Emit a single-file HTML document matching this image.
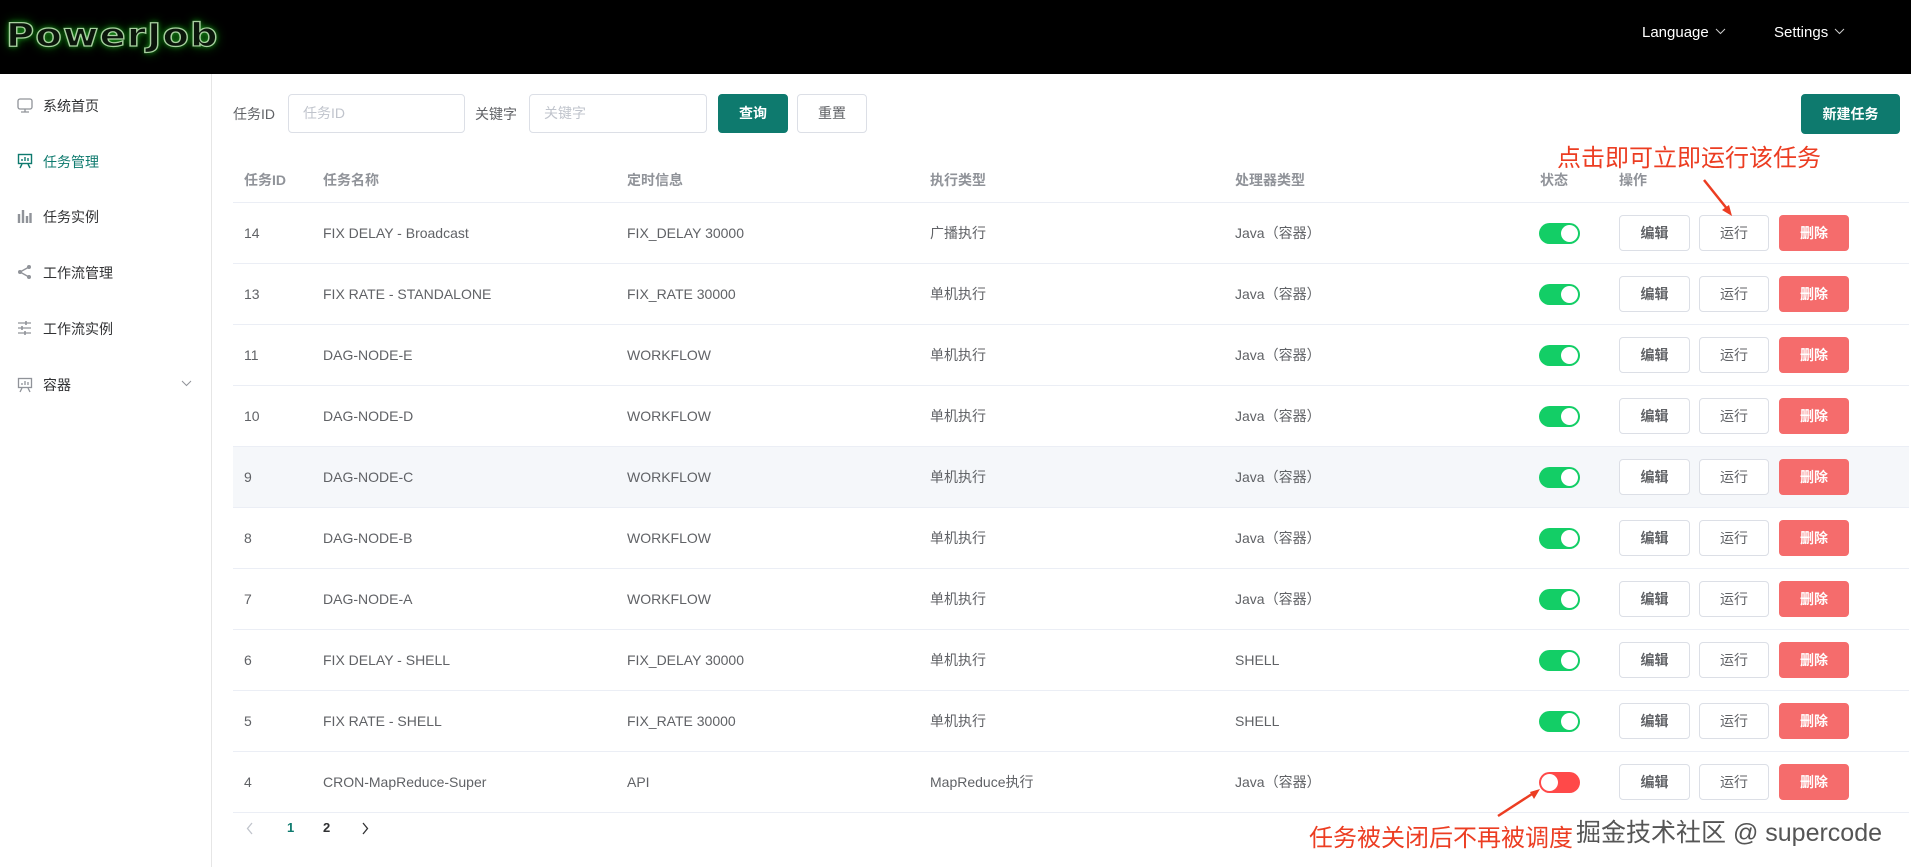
<!DOCTYPE html>
<html><head><meta charset="utf-8"><style>
*{box-sizing:border-box;margin:0;padding:0}
body{width:1911px;height:867px;overflow:hidden;background:#fff;font-family:"Liberation Sans","Noto Sans CJK SC",sans-serif;color:#606266;font-size:14px;position:relative}
.hd{position:absolute;left:0;top:0;width:1911px;height:74px;background:#000}
.logo{position:absolute;left:6px;top:16px;font-size:32px;font-weight:bold;color:#0b160b;-webkit-text-stroke:1.2px #a8d0a0;text-shadow:0 0 5px #1a9a1a,0 0 10px #0d6a0d;transform:scaleX(1.2);transform-origin:left;letter-spacing:1px;font-family:"DejaVu Sans","Liberation Sans",sans-serif}
.nav{position:absolute;top:24px;color:#fff;font-size:15px}
.nav svg{margin-left:6px;vertical-align:2px}
.sb{position:absolute;left:0;top:74px;width:212px;height:793px;border-right:1px solid #e6e6e6;background:#fff}
.mi{position:absolute;left:43px;font-size:14px;color:#303133}
.mi.act{color:#0e7a6e}
.ic{position:absolute;left:17px}
.a{position:absolute}
.inp{position:absolute;top:94px;height:39px;border:1px solid #dcdfe6;border-radius:4px;color:#c0c4cc;padding-left:14px;line-height:37px;font-size:14px}
.btn{position:absolute;height:36px;border:1px solid #dcdfe6;border-radius:4px;text-align:center;line-height:34px;font-size:14px;color:#606266;background:#fff}
.g{background:#0e7a6e;border-color:#0e7a6e;color:#fff;font-weight:bold}
.r{background:#f56c6c;border-color:#f56c6c;color:#fff}
.line{position:absolute;left:233px;width:1676px;height:1px;background:#ebeef5}
.th{position:absolute;top:170px;font-weight:bold;color:#909399;font-size:14px}
.cell{position:absolute;font-size:14px;color:#606266;line-height:20px}
.tg{position:absolute;left:1539px;width:41px;height:21px;border-radius:11px;background:#13ce66}
.tg::after{content:"";position:absolute;right:2px;top:2px;width:17px;height:17px;border-radius:50%;background:#fff}
.tg.off{background:#ff4949}
.tg.off::after{left:2px;right:auto}
.ann{position:absolute;color:#ec3d22;font-size:24px}
</style></head><body>
<div class="hd">
<div class="logo">PowerJob</div>
<div class="nav" style="left:1642px">Language<svg width="11" height="7" viewBox="0 0 11 7"><path d="M1 1l4.5 4.5L10 1" stroke="#ccc" fill="none"/></svg></div>
<div class="nav" style="left:1774px">Settings<svg width="11" height="7" viewBox="0 0 11 7"><path d="M1 1l4.5 4.5L10 1" stroke="#ccc" fill="none"/></svg></div>
</div>
<div class="sb">
<svg class="ic" style="top:24px" width="16" height="15" viewBox="0 0 16 15"><rect x="1" y="1" width="14" height="10" rx="2" fill="none" stroke="#909399" stroke-width="1.3"/><path d="M8 11v3M4 14h8" stroke="#909399" stroke-width="1.3"/></svg>
<div class="mi" style="top:22px">系统首页</div>
<svg class="ic" style="top:79px" width="16" height="16" viewBox="0 0 16 16"><rect x="1.5" y="1.5" width="13" height="9" fill="none" stroke="#0e7a6e" stroke-width="1.4"/><path d="M5 8V6M8 8V4M11 8V5M5 11l-2 4M11 11l2 4" stroke="#0e7a6e" stroke-width="1.4"/></svg>
<div class="mi act" style="top:78px">任务管理</div>
<svg class="ic" style="top:135px" width="15" height="14" viewBox="0 0 15 14"><path d="M2 5v9M6 1v13M10 7v7M13.5 4v10" stroke="#909399" stroke-width="2.4"/></svg>
<div class="mi" style="top:133px">任务实例</div>
<svg class="ic" style="top:191px" width="15" height="14" viewBox="0 0 15 14"><circle cx="3" cy="7" r="2" fill="#909399"/><circle cx="12" cy="2" r="2" fill="#909399"/><circle cx="12" cy="12" r="2" fill="#909399"/><path d="M3 7L12 2M3 7l9 5" stroke="#909399" stroke-width="1.3"/></svg>
<div class="mi" style="top:189px">工作流管理</div>
<svg class="ic" style="top:247px" width="15" height="14" viewBox="0 0 15 14"><path d="M1 2h13M1 7h13M1 12h13" stroke="#909399" stroke-width="1.2"/><path d="M9 0v4M5 5v4M8 10v4" stroke="#909399" stroke-width="1.6"/></svg>
<div class="mi" style="top:245px">工作流实例</div>
<svg class="ic" style="top:303px" width="16" height="16" viewBox="0 0 16 16"><rect x="1.5" y="1.5" width="13" height="9" fill="none" stroke="#909399" stroke-width="1.3"/><path d="M5 8V6M8 8V4M11 8V5M5 11l-2 4M11 11l2 4" stroke="#909399" stroke-width="1.3"/></svg>
<div class="mi" style="top:301px">容器</div>
<svg style="position:absolute;left:181px;top:306px" width="11" height="7" viewBox="0 0 11 7"><path d="M1 1l4.5 4.5L10 1" stroke="#909399" fill="none"/></svg>
</div>

<div class="a" style="left:233px;top:104px;color:#606266">任务ID</div>
<div class="inp" style="left:288px;width:177px">任务ID</div>
<div class="a" style="left:475px;top:104px;color:#606266">关键字</div>
<div class="inp" style="left:529px;width:178px">关键字</div>
<div class="btn g" style="left:718px;top:94px;width:70px;height:39px;line-height:37px">查询</div>
<div class="btn" style="left:797px;top:94px;width:70px;height:39px;line-height:37px">重置</div>
<div class="btn g" style="left:1801px;top:94px;width:99px;height:40px;line-height:38px">新建任务</div>

<div class="th" style="left:244px">任务ID</div>
<div class="th" style="left:323px">任务名称</div>
<div class="th" style="left:627px">定时信息</div>
<div class="th" style="left:930px">执行类型</div>
<div class="th" style="left:1235px">处理器类型</div>
<div class="th" style="left:1540px">状态</div>
<div class="th" style="left:1619px">操作</div>
<div class="line" style="top:202px"></div>

<div style="position:absolute;left:233px;top:447px;width:1676px;height:61px;background:#f5f7fa"></div>

<div id="rows"></div>
<script>
var d=[["14","FIX DELAY - Broadcast","FIX_DELAY 30000","广播执行","Java（容器）"],
["13","FIX RATE - STANDALONE","FIX_RATE 30000","单机执行","Java（容器）"],
["11","DAG-NODE-E","WORKFLOW","单机执行","Java（容器）"],
["10","DAG-NODE-D","WORKFLOW","单机执行","Java（容器）"],
["9","DAG-NODE-C","WORKFLOW","单机执行","Java（容器）"],
["8","DAG-NODE-B","WORKFLOW","单机执行","Java（容器）"],
["7","DAG-NODE-A","WORKFLOW","单机执行","Java（容器）"],
["6","FIX DELAY - SHELL","FIX_DELAY 30000","单机执行","SHELL"],
["5","FIX RATE - SHELL","FIX_RATE 30000","单机执行","SHELL"],
["4","CRON-MapReduce-Super","API","MapReduce执行","Java（容器）"]];
var xs=[244,323,627,930,1235],h="";
d.forEach(function(r,i){var c=233+i*61;
r.forEach(function(t,j){h+='<div class="cell" style="left:'+xs[j]+'px;top:'+(c-10)+'px">'+t+'</div>';});
h+='<div class="tg'+(i==9?' off':'')+'" style="top:'+(c-10)+'px"></div>';
h+='<div class="btn" style="left:1619px;top:'+(c-18)+'px;width:71px;font-weight:bold">编辑</div>';
h+='<div class="btn" style="left:1699px;top:'+(c-18)+'px;width:70px">运行</div>';
h+='<div class="btn r" style="left:1779px;top:'+(c-18)+'px;width:70px;font-weight:bold">删除</div>';
h+='<div class="line" style="top:'+(c+30)+'px"></div>';});
document.getElementById("rows").innerHTML=h;
</script>

<svg class="a" style="left:246px;top:822px" width="8" height="13" viewBox="0 0 8 13"><path d="M6 1L1.5 6.5 6 12" stroke="#c0c4cc" fill="none" stroke-width="1.3"/></svg>
<div class="a" style="left:287px;top:820px;color:#0e7a6e;font-weight:bold;font-size:13px">1</div>
<div class="a" style="left:323px;top:820px;color:#303133;font-weight:bold;font-size:13px">2</div>
<svg class="a" style="left:361px;top:822px" width="8" height="13" viewBox="0 0 8 13"><path d="M2 1l4.5 5.5L2 12" stroke="#303133" fill="none" stroke-width="1.3"/></svg>

<div class="ann" style="left:1557px;top:138px">点击即可立即运行该任务</div>
<svg class="a" style="left:0;top:0;pointer-events:none" width="1911" height="867"><path d="M1704 180L1728 210" stroke="#ec3d22" stroke-width="2.5"/><path d="M1732 216l-10-6 7-5z" fill="#ec3d22"/>
<path d="M1498 816L1532 794" stroke="#ec3d22" stroke-width="2.5"/><path d="M1540 789l-6 10-4-7z" fill="#ec3d22"/></svg>
<div class="ann" style="left:1309px;top:818px">任务被关闭后不再被调度</div>
<div class="a" style="left:1576px;top:813px;font-size:25px;color:#555;text-shadow:1px 1px 0 #fff,-1px -1px 0 #fff">掘金技术社区 @ supercode</div>
</body></html>
